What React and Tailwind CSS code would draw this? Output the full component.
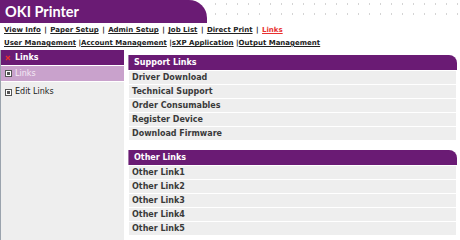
import React from "react";

const navTop = ["View Info", "Paper Setup", "Admin Setup", "Job List", "Direct Print"];
const support = ["Driver Download", "Technical Support", "Order Consumables", "Register Device", "Download Firmware"];
const other = ["Other Link1", "Other Link2", "Other Link3", "Other Link4", "Other Link5"];

function Bullet() {
  return (
    <span className="inline-flex w-[7px] h-[7px] border border-[#555] bg-white items-center justify-center mr-[3px] shrink-0">
      <span className="w-[3px] h-[3px] bg-[#555]" />
    </span>
  );
}

function Panel({ title, items }) {
  return (
    <div className="flex flex-col">
      <div className="h-[15px] bg-[#6a1b74] rounded-tr-[8px] border-l border-[#a77aad] flex items-center pl-[5px] text-white font-bold text-[8px]">
        {title}
      </div>
      <div className="flex flex-col pl-[1px] pr-[1px]">
        {items.map((t) => (
          <div key={t} className="h-[13px] mt-[1px] bg-[#eeeeee] flex items-center pl-[3px] text-[#3a3a3a] font-bold text-[8px]">
            {t}
          </div>
        ))}
      </div>
    </div>
  );
}

export default function App() {
  return (
    <div className="w-[460px] h-[240px] bg-white overflow-hidden flex flex-col" style={{ fontFamily: '"DejaVu Sans", Verdana, sans-serif' }}>
      <div className="h-[23px] flex shrink-0">
        <div className="w-[207px] bg-[#6a1b74] rounded-tr-[18px] flex items-center pl-[5px] pt-[1px]">
          <span className="text-white font-bold text-[14.5px] leading-none" style={{ fontFamily: 'Lato, sans-serif' }}>OKI Printer</span>
        </div>
        <div className="flex-1 bg-[radial-gradient(circle,#d4d4d4_0.8px,transparent_1px)] bg-[size:11px_10px] bg-[position:3px_-1px]" />
      </div>
      <div className="pl-[4px] pt-[1px] text-[7px] font-bold text-[#222] leading-[13px]">
        <div className="whitespace-nowrap">
          {navTop.map((t) => (
            <span key={t}>
              <span className="underline">{t}</span>
              {" "}<span className="px-[1px]">|</span>{" "}
            </span>
          ))}
          <span className="underline text-[#e8302f]">Links</span>
        </div>
        <div className="whitespace-nowrap">
          <span className="underline">User Management</span>{" |"}
          <span className="underline">Account Management</span>{" |"}
          <span className="underline">sXP Application</span>{" |"}
          <span className="underline">Output Management</span>
        </div>
      </div>
      <div className="flex flex-1">
        <div className="w-[124px] bg-[#eeeeee] border-l border-[#9aa3ad] flex flex-col">
          <div className="h-[15px] bg-[#6a1b74] flex items-center pl-[4px] text-white font-bold text-[8px]">
            <svg width="6" height="6" viewBox="0 0 6 6" className="mr-[4px]">
              <path d="M1 1 L3 3 L1 5 M5 1 L3 3 L5 5" stroke="#e8302f" strokeWidth="1.3" fill="none" />
            </svg>
            Links
          </div>
          <div className="h-[1px] bg-white" />
          <div className="h-[15px] bg-[#c9a2cc] flex items-center pl-[4px] text-[#f4eaf5] text-[8px]">
            <Bullet />Links
          </div>
          <div className="h-[1px] bg-white" />
          <div className="h-[20px] flex items-center pl-[4px] text-[#222] text-[8px]">
            <Bullet />Edit Links
          </div>
        </div>
        <div className="ml-[4px] w-[329px] pt-[5px] flex flex-col gap-[10px]">
          <Panel title="Support Links" items={support} />
          <Panel title="Other Links" items={other} />
        </div>
      </div>
    </div>
  );
}
